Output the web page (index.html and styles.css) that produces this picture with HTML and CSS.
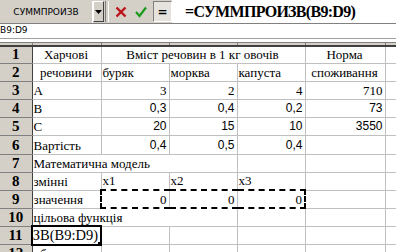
FILE: index.html
```html
<!DOCTYPE html>
<html lang="uk">
<head>
    <meta charset="UTF-8">
    <title>Excel</title>
    <link rel="stylesheet" href="styles.css">
</head>
<body>
    <div class="toolbar">
        <div class="name-box">СУММПРОИЗВ</div>
        <div class="drop-btn">
            <svg width="7" height="4" viewBox="0 0 7 4"><polygon points="0,0 7,0 3.5,4" fill="#000"/></svg>
        </div>
        <div class="sep"></div>
        <div class="tool-icon">
            <svg width="12" height="12" viewBox="0 0 12 12">
                <line x1="1.5" y1="1.5" x2="10.5" y2="10.5" stroke="#c0141a" stroke-width="2.4"/>
                <line x1="10.5" y1="1.5" x2="1.5" y2="10.5" stroke="#c0141a" stroke-width="2.4"/>
            </svg>
        </div>
        <div class="tool-icon">
            <svg width="12" height="12" viewBox="0 0 12 12">
                <polyline points="1,6 4.5,10 11,1.5" fill="none" stroke="#1a9a1a" stroke-width="2.2"/>
            </svg>
        </div>
        <div class="eq-btn">=</div>
        <div class="formula">=СУММПРОИЗВ(B9:D9)</div>
    </div>

    <div class="status">B9:D9</div>

    <table class="sheet">
        <colgroup>
            <col class="c-h"><col class="c-a"><col class="c-n"><col class="c-n"><col class="c-n"><col class="c-e"><col class="c-f">
        </colgroup>
        <tr class="colhead">
            <td class="rh"></td><td></td><td></td><td></td><td></td><td></td><td></td>
        </tr>
        <tr>
            <td class="rh">1</td><td class="ctr">Харчові</td><td colspan="3" class="ctr">Вміст речовин в 1 кг овочів</td><td class="ctr">Норма</td><td></td>
        </tr>
        <tr>
            <td class="rh">2</td><td class="ctr">речовини</td><td>буряк</td><td>морква</td><td>капуста</td><td class="ctr">споживання</td><td></td>
        </tr>
        <tr>
            <td class="rh">3</td><td>A</td><td class="num">3</td><td class="num">2</td><td class="num">4</td><td class="num">710</td><td></td>
        </tr>
        <tr>
            <td class="rh">4</td><td>B</td><td class="num sans">0,3</td><td class="num sans">0,4</td><td class="num sans">0,2</td><td class="num sans">73</td><td></td>
        </tr>
        <tr>
            <td class="rh">5</td><td>C</td><td class="num sans">20</td><td class="num sans">15</td><td class="num sans">10</td><td class="num sans">3550</td><td></td>
        </tr>
        <tr>
            <td class="rh">6</td><td>Вартість</td><td class="num sans">0,4</td><td class="num sans">0,5</td><td class="num sans">0,4</td><td></td><td></td>
        </tr>
        <tr>
            <td class="rh">7</td><td class="spill" colspan="2">Математична модель</td><td></td><td></td><td></td><td></td>
        </tr>
        <tr>
            <td class="rh">8</td><td>змінні</td><td>x1</td><td>x2</td><td>x3</td><td></td><td></td>
        </tr>
        <tr>
            <td class="rh">9</td><td>значення</td><td class="num ants ants-l">0</td><td class="num ants">0</td><td class="num ants ants-r">0</td><td></td><td></td>
        </tr>
        <tr>
            <td class="rh">10</td><td class="spill" colspan="2">цільова функція</td><td></td><td></td><td></td><td></td>
        </tr>
        <tr>
            <td class="rh">11</td><td class="active"><div class="edit"><span>СУММПРОИЗВ(B9:D9)</span></div><i class="handle"></i></td><td></td><td></td><td></td><td></td><td></td>
        </tr>
        <tr>
            <td class="rh">12</td><td>обмеження</td><td></td><td></td><td></td><td></td><td></td>
        </tr>
    </table>
</body>
</html>
```

FILE: styles.css
```css
body {
  margin: 0;
  background: #fff;
  width: 396px;
  height: 252px;
  overflow: hidden;
  font-family: "Liberation Serif", "Times New Roman", serif;
}

/* panel formula */
.toolbar {
  display: flex;
  height: 24px;
  background: #d4d0c8;
  border-bottom: 1px solid #808080;
  box-sizing: border-box;
}

.name-box {
  width: 93px;
  height: 22px;
  margin-top: 1px;
  display: flex;
  align-items: center;
  justify-content: center;
  font-family: "DejaVu Sans", sans-serif;
  font-size: 9px;
  color: #000;
  background: #d4d0c8;
  border-right: 1px solid #fff;
  box-sizing: border-box;
}

.drop-btn {
  width: 11px;
  height: 21px;
  margin-top: 1px;
  display: flex;
  align-items: center;
  justify-content: center;
  border-top: 1px solid #fff;
  border-left: 1px solid #fff;
  border-right: 1px solid #404040;
  border-bottom: 1px solid #404040;
  box-sizing: border-box;
}

.sep {
  width: 2px;
  margin: 1px 2px 1px 1px;
  border-left: 1px solid #808080;
  border-right: 1px solid #fff;
}

.tool-icon {
  width: 20px;
  display: flex;
  align-items: center;
  justify-content: center;
}

.eq-btn {
  width: 19px;
  height: 21px;
  margin: 1px 0 0 2px;
  display: flex;
  align-items: center;
  justify-content: center;
  font-family: "DejaVu Sans", sans-serif;
  font-weight: bold;
  font-size: 12px;
  background: #e6e3de;
  border-top: 1px solid #808080;
  border-left: 1px solid #808080;
  border-right: 1px solid #fff;
  border-bottom: 1px solid #fff;
  box-sizing: border-box;
}

.formula {
  flex: 1;
  padding-left: 13px;
  background: #fff;
  font-size: 16px;
  letter-spacing: -0.7px;
  font-weight: bold;
  line-height: 23px;
  white-space: nowrap;
  overflow: hidden;
}

.status {
  height: 14px;
  font-family: "DejaVu Sans", sans-serif;
  font-size: 9px;
  line-height: 13px;
  border-bottom: 1px solid #a0a0a0;
}

/* сітка */
.sheet {
  border-collapse: collapse;
  table-layout: fixed;
  width: 405px;
  margin-top: 3px;
  font-size: 13px;
}

.c-h { width: 32px; }
.c-a { width: 69px; }
.c-n { width: 68px; }
.c-e { width: 80px; }
.c-f { width: 20px; }

.sheet td {
  height: 18.1px;
  padding: 0 2px 0 1px;
  border-right: 1px solid #c0c0c0;
  border-bottom: 1px solid #c0c0c0;
  white-space: nowrap;
  overflow: hidden;
  line-height: 15px;
  box-sizing: border-box;
}

.sheet tr.colhead td {
  height: 3px;
  padding: 0;
  background: #d4d0c8;
  border-top: 1px solid #808080;
  border-bottom: 2px solid #404040;
  border-right: 1px solid #808080;
}

.sheet td.rh {
  background: #d4d0c8;
  text-align: center;
  font-weight: bold;
  font-size: 15px;
  padding: 0;
  border-right: 1px solid #404040;
  border-bottom: 1px solid #808080;
}

.ctr { text-align: center; }
.num { text-align: right; }
.sans {
  font-family: "Liberation Sans", Arial, sans-serif;
  font-size: 12px;
}

.sheet td.spill {
  overflow: visible;
  border-right-color: transparent;
}

.sheet td.ants {
  border-top: 2px dashed #000;
  border-bottom: 2px dashed #000;
}
.sheet td.ants-l { border-left: 2px dashed #000; }
.sheet td.ants-r { border-right: 2px dashed #000; }

.sheet td.active {
  position: relative;
  border: 2px solid #000;
  padding: 0;
}

.edit {
  display: flex;
  justify-content: flex-end;
  overflow: hidden;
  padding-right: 2px;
  font-size: 14.5px;
}

.handle {
  position: absolute;
  right: -3px;
  bottom: -3px;
  width: 4px;
  height: 4px;
  background: #000;
  border: 1px solid #fff;
}
```
